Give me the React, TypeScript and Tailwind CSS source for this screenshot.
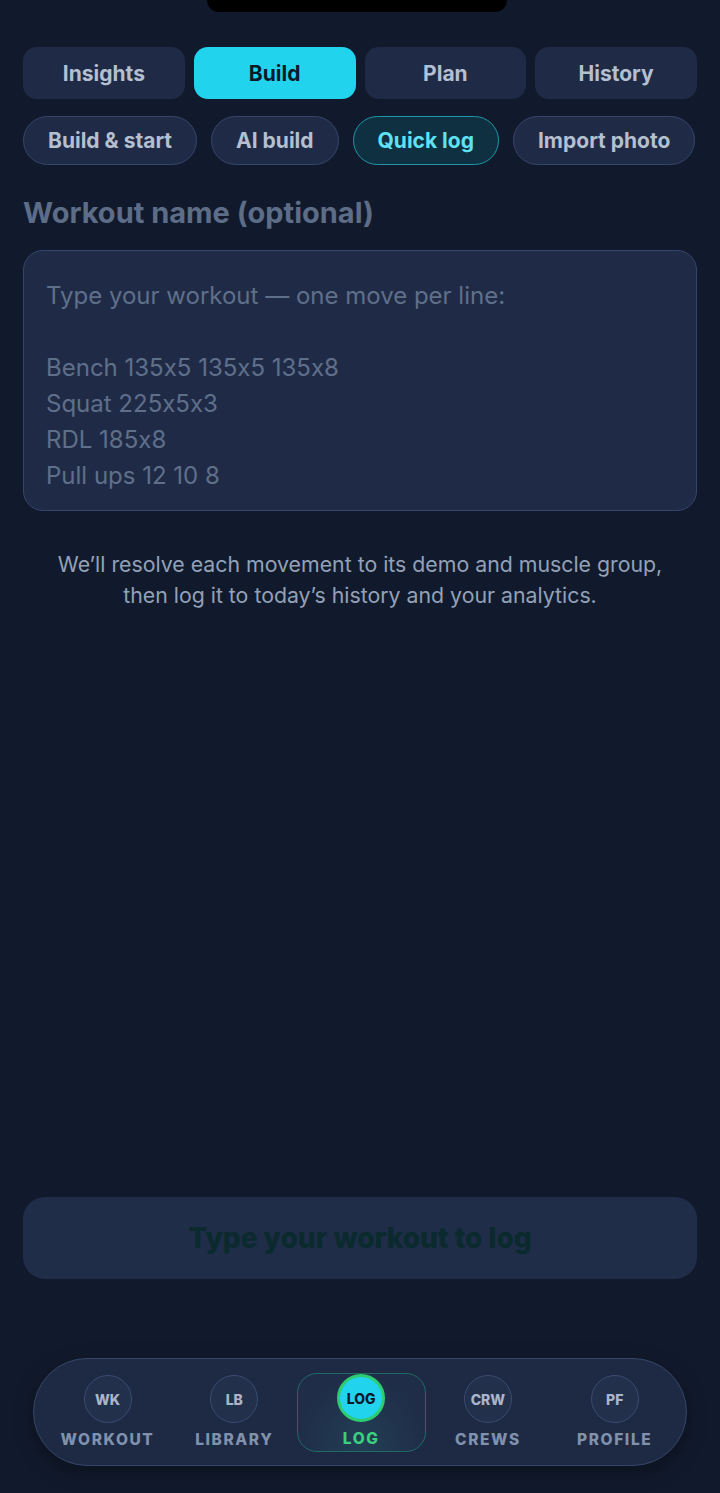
import React from 'react';

const mainTabs = ['Insights', 'Build', 'Plan', 'History'];
const subTabs = ['Build & start', 'AI build', 'Quick log', 'Import photo'];
const navItems = [
  { code: 'WK', label: 'WORKOUT' },
  { code: 'LB', label: 'LIBRARY' },
  { code: 'LOG', label: 'LOG' },
  { code: 'CRW', label: 'CREWS' },
  { code: 'PF', label: 'PROFILE' },
];

export default function App() {
  return (
    <div className="w-[720px] h-[1493px] bg-[#111a2c] flex flex-col relative overflow-hidden font-[Inter,'Noto_Sans',sans-serif] [font-feature-settings:'calt'_0]">
      {/* notch */}
      <div className="absolute left-[207px] top-0 w-[300px] h-[12px] bg-black rounded-b-[12px]" />

      <div className="px-[23px] pt-[47px] flex flex-col">
        <div className="grid grid-cols-4 gap-[9px]">
          {mainTabs.map((t) => (
            <button
              key={t}
              className={
                t === 'Build'
                  ? 'h-[52px] pt-[1px] rounded-[14px] bg-[#22d3ee] text-[#0b1a2a] text-[21px] font-bold'
                  : 'h-[52px] pt-[1px] rounded-[14px] bg-[#1f2b46] text-[#b4bfd0] text-[21px] font-bold'
              }
            >
              {t}
            </button>
          ))}
        </div>

        <div className="flex gap-[14px] mt-[17px]">
          {subTabs.map((t) => (
            <button
              key={t}
              className={
                t === 'Quick log'
                  ? 'h-[49px] px-[24px] rounded-full border border-[#1d97a9] bg-[#0f3040] text-[#5ee2f3] text-[21px] font-bold'
                  : 'h-[49px] px-[24px] rounded-full border border-[#36456a] bg-[#1f2b46] text-[#b4bfd0] text-[21px] font-bold'
              }
            >
              {t}
            </button>
          ))}
        </div>

        <input
          className="mt-[28px] h-[40px] bg-transparent outline-none text-[29px] font-bold text-[#cbd5e1] placeholder:text-[#5d6d87]"
          placeholder="Workout name (optional)"
        />

        <textarea
          className="mt-[17px] h-[261px] w-full resize-none rounded-[20px] border border-[#36456a] bg-[#1f2b46] px-[22px] pt-[27px] text-[24px] leading-[36px] text-[#cbd5e1] placeholder:text-[#5f6f8a] outline-none"
          placeholder={'Type your workout \u2014 one move per line:\n\nBench 135x5 135x5 135x8\nSquat 225x5x3\nRDL 185x8\nPull ups 12 10 8'}
        />

        <p className="mt-[38px] text-center text-[21.3px] leading-[31px] text-[#93a1b8]">
          We’ll resolve each movement to its demo and muscle group,
          <br />
          then log it to today’s history and your analytics.
        </p>
      </div>

      <div className="flex-1" />

      <div className="px-[23px]">
        <button className="w-full h-[82px] rounded-[22px] bg-[#1f2d48] text-[28px] font-extrabold text-[#0a2a2d]">
          Type your workout to log
        </button>
      </div>

      <div className="px-[33px] mt-[79px] mb-[27px]">
        <nav className="h-[108px] rounded-[54px] border border-[#364669] bg-[#1e2a44] px-[9px] grid grid-cols-5 items-center shadow-[0_6px_20px_rgba(0,0,0,0.35)]">
          {navItems.map((n) => {
            const active = n.code === 'LOG';
            return (
              <div
                key={n.code}
                className={
                  active
                    ? 'mx-auto w-[129px] h-[79px] rounded-[20px] border border-[#1f6b63] bg-[radial-gradient(ellipse_at_50%_90%,#223e55_0%,#1f2d48_70%)] flex flex-col items-center justify-end'
                    : 'mx-auto w-[129px] h-[79px] flex flex-col items-center justify-end'
                }
              >
                <div
                  className={
                    active
                      ? 'w-[48px] h-[48px] rounded-full bg-[#22d3ee] border-[3px] border-[#2ecc71] flex items-center justify-center text-[14px] font-extrabold text-[#0b1a2a]'
                      : 'w-[48px] h-[48px] rounded-full border border-[#3a4a70] bg-[#23304c] flex items-center justify-center text-[14px] font-extrabold text-[#a9b5ca]'
                  }
                >
                  {n.code}
                </div>
                <span
                  className={
                    active
                      ? 'mt-[5px] text-[15.5px] font-extrabold tracking-[1.6px] text-[#3ccf7e]'
                      : 'mt-[5px] text-[15.5px] font-extrabold tracking-[1.6px] text-[#8091ad]'
                  }
                >
                  {n.label}
                </span>
              </div>
            );
          })}
        </nav>
      </div>
    </div>
  );
}
